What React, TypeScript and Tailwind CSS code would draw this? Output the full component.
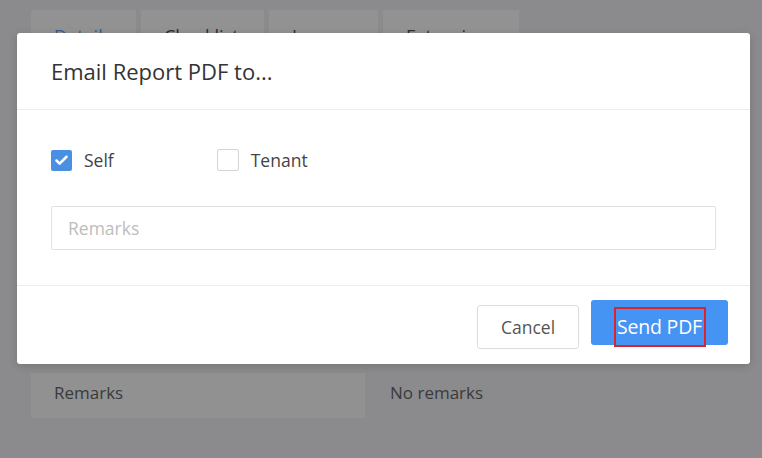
import { Check } from 'lucide-react';

const tabs = [
  { label: 'Details', width: 'w-[105px]', active: true },
  { label: 'Checklist', width: 'w-[123px]', active: false },
  { label: 'Images', width: 'w-[109px]', active: false },
  { label: 'Extension', width: 'w-[136px]', active: false },
];

export default function App() {
  return (
    <div className="relative w-[762px] h-[458px] overflow-hidden bg-[#8b8b8e] font-['Open_Sans',sans-serif]">
      {/* Page behind the dimmed overlay */}
      <div className="flex gap-[5px] pl-[31px] pt-[10px]">
        {tabs.map((t) => (
          <div
            key={t.label}
            className={`${t.width} h-[44px] bg-[#929293] pl-[23px] pt-[17px] text-[18px] leading-none ${
              t.active ? 'text-[#3a5a8c]' : 'text-[#2e2e2e]'
            }`}
          >
            {t.label}
          </div>
        ))}
      </div>
      <div className="mt-[319px] flex items-center">
        <div className="ml-[31px] w-[334px] h-[45px] bg-[#919192] flex items-center pl-[23px] pb-[6px] text-[17px] text-[#3a3a3a]">
          Remarks
        </div>
        <div className="ml-[25px] pb-[6px] text-[17px] text-[#3a3a3a]">No remarks</div>
      </div>

      {/* Modal */}
      <div className="absolute left-[17px] top-[33px] w-[733px] bg-white rounded-[3px] shadow-[0_2px_8px_rgba(0,0,0,0.15)]">
        <div className="h-[77px] flex items-center px-[34px] border-b border-[#ececec]">
          <h2 className="text-[22px] text-[#333333] pt-[1px]">Email Report PDF to...</h2>
        </div>

        <div className="h-[175px] px-[34px] pt-[39px]">
          <div className="flex items-center h-[22px]">
            <span className="w-[21px] h-[21px] rounded-[2px] bg-[#4a90e2] flex items-center justify-center">
              <Check className="w-[15px] h-[15px] text-white" strokeWidth={4} />
            </span>
            <span className="ml-[12px] text-[17.5px] text-[#444444]">Self</span>
            <span className="ml-[103px] w-[22px] h-[22px] rounded-[2px] border border-[#d4d4d4] bg-white" />
            <span className="ml-[12px] text-[17.5px] text-[#444444]">Tenant</span>
          </div>
          <div className="mt-[35px] w-[665px] h-[44px] border border-[#e2e2e2] rounded-[2px] flex items-center pl-[16px] text-[17.5px] text-[#bdbdbd]">
            Remarks
          </div>
        </div>

        <div className="h-[79px] border-t border-[#ececec] flex items-start justify-end gap-[12px] pr-[22px]">
          <button className="mt-[19px] w-[102px] h-[44px] border border-[#dcdcdc] rounded-[3px] bg-white text-[17.5px] text-[#555555]">
            Cancel
          </button>
          <button className="mt-[14px] w-[137px] h-[45px] rounded-[3px] bg-[#4593f3] flex items-center justify-center">
            <span className="mt-[9px] w-[92px] h-[40px] border-2 border-[#d8262c] flex items-center justify-center text-[19.5px] tracking-[-0.2px] text-white whitespace-nowrap">
              Send PDF
            </span>
          </button>
        </div>
      </div>
    </div>
  );
}
